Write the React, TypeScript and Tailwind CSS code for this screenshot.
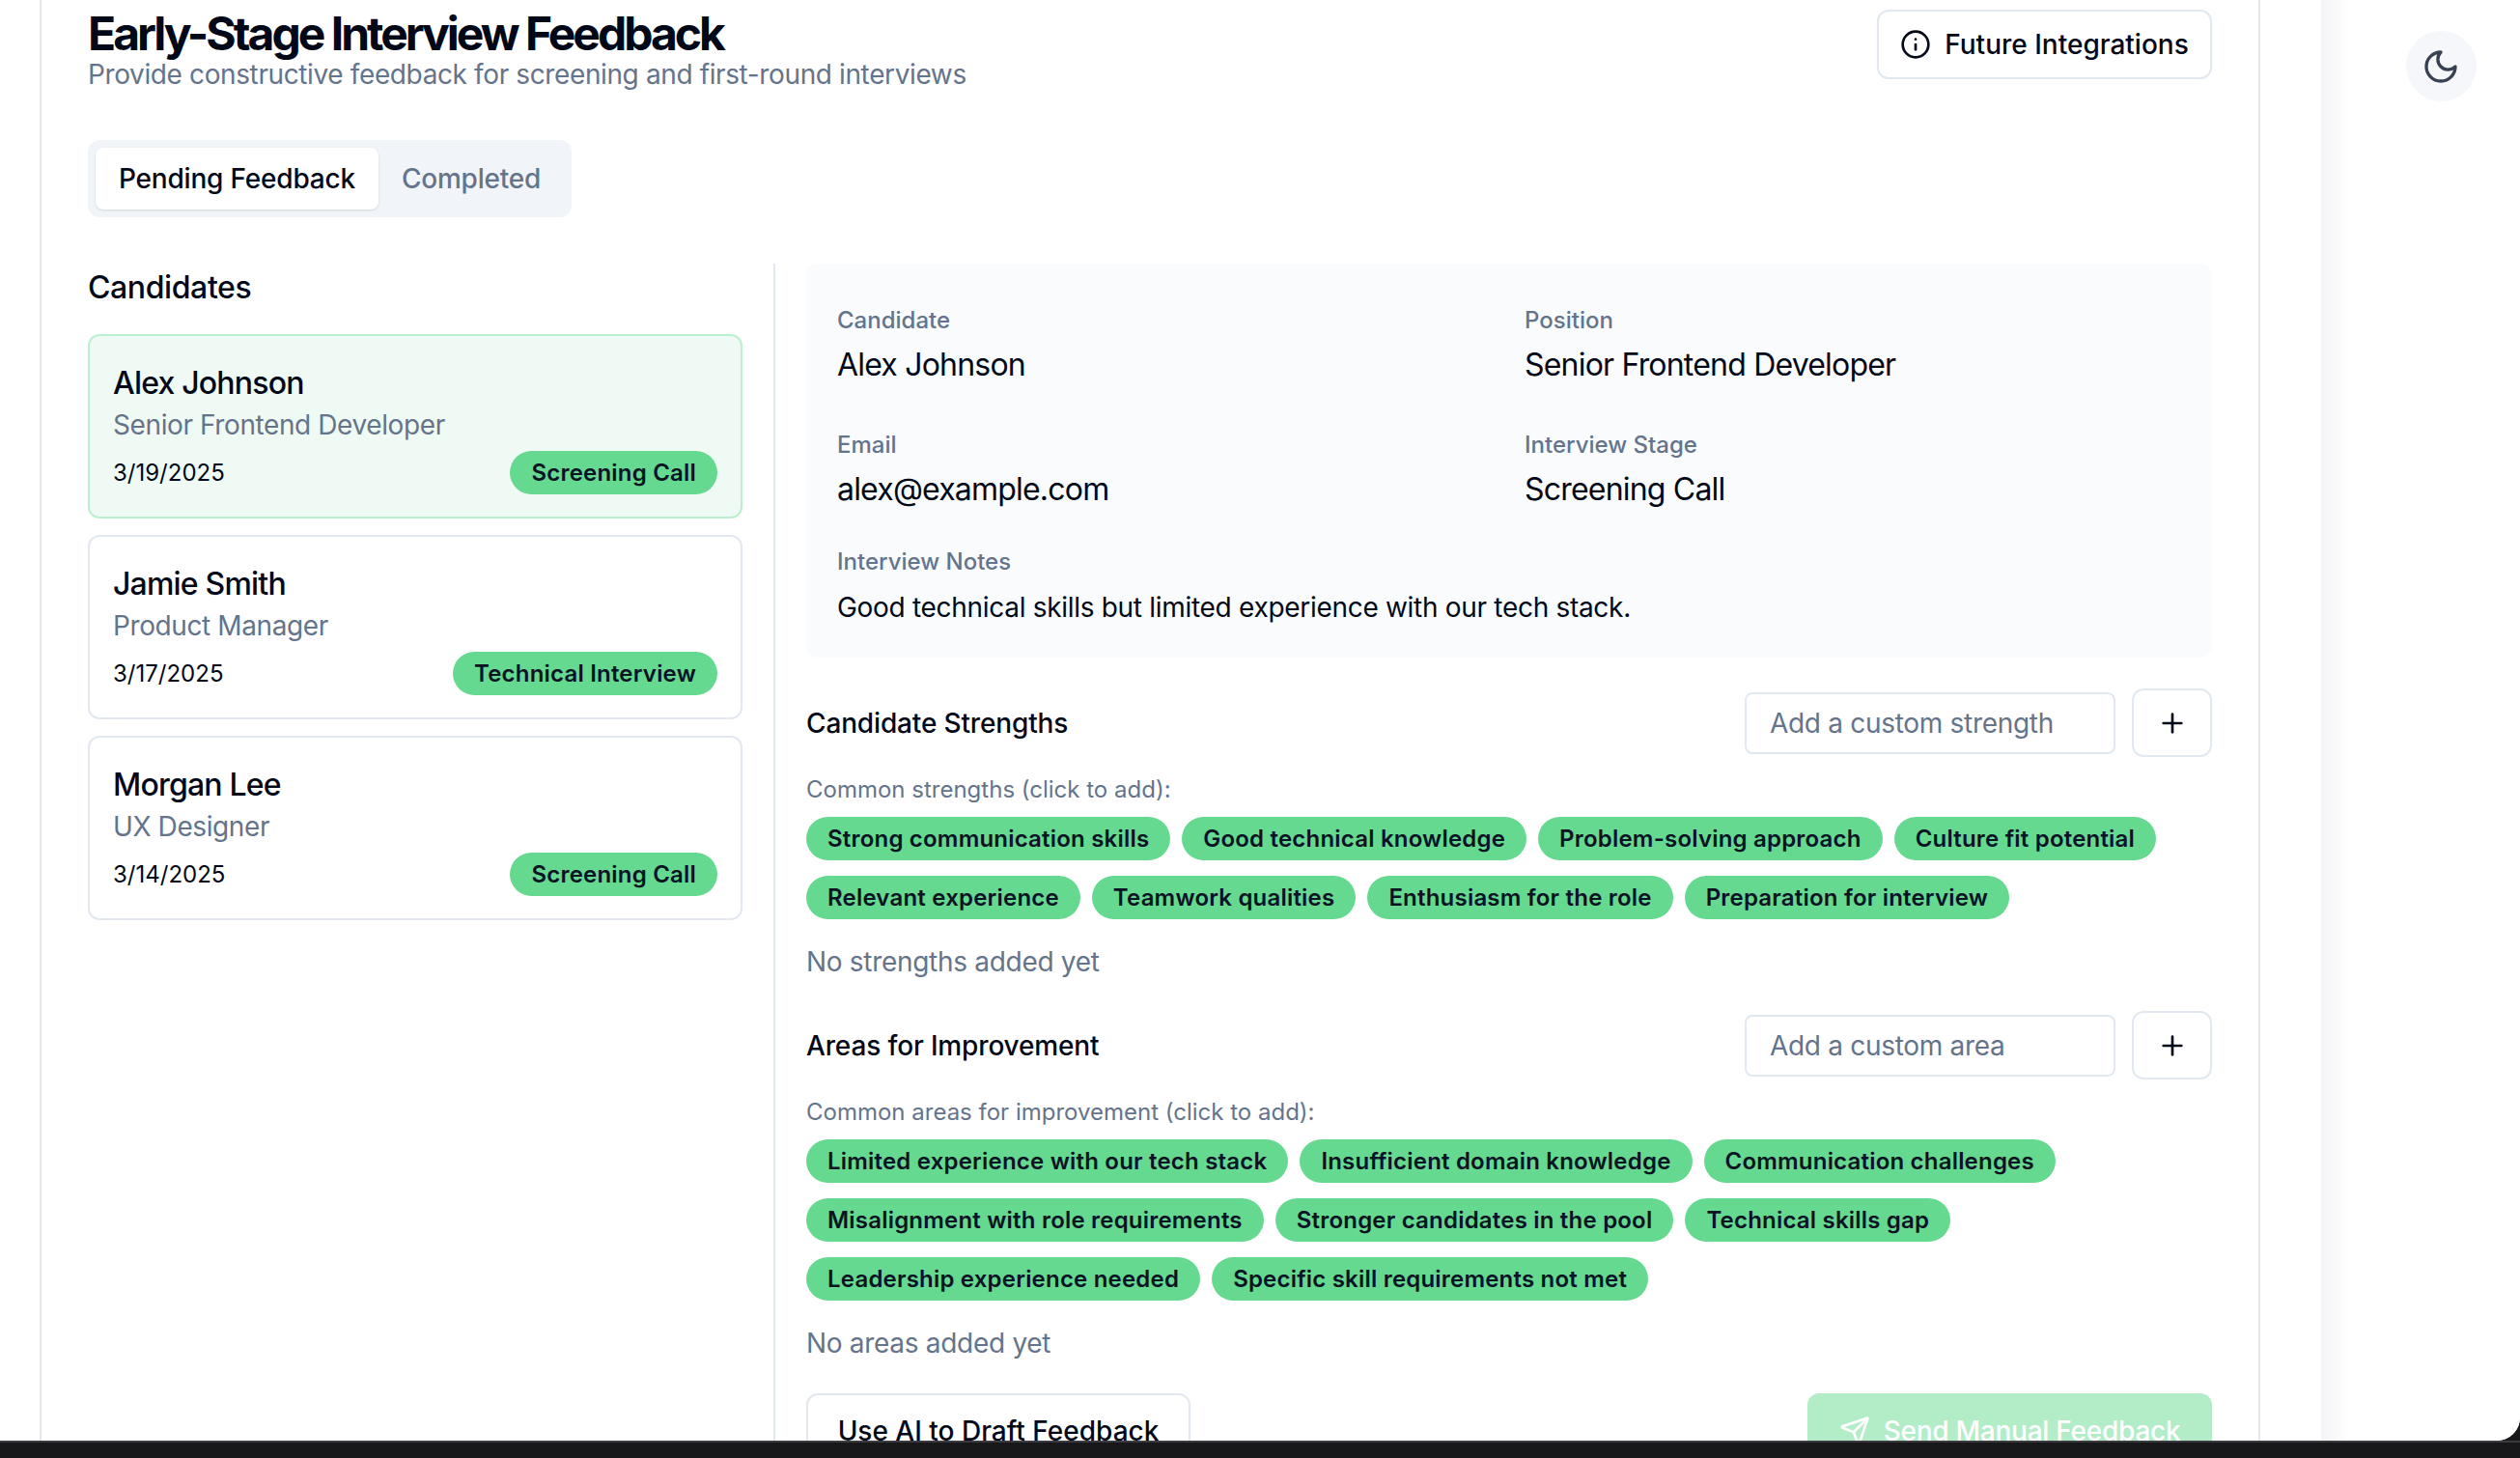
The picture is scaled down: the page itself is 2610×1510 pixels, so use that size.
import React from "react";
import { Info, Plus, Send } from "lucide-react";

const strengths = ["Strong communication skills","Good technical knowledge","Problem-solving approach","Culture fit potential","Relevant experience","Teamwork qualities","Enthusiasm for the role","Preparation for interview"];
const areas = ["Limited experience with our tech stack","Insufficient domain knowledge","Communication challenges","Misalignment with role requirements","Stronger candidates in the pool","Technical skills gap","Leadership experience needed","Specific skill requirements not met"];
const candidates = [
  { name: "Alex Johnson", role: "Senior Frontend Developer", date: "3/19/2025", stage: "Screening Call", active: true },
  { name: "Jamie Smith", role: "Product Manager", date: "3/17/2025", stage: "Technical Interview", active: false },
  { name: "Morgan Lee", role: "UX Designer", date: "3/14/2025", stage: "Screening Call", active: false },
];

function Chip({ children }: { children: React.ReactNode }) {
  return <span className="inline-flex h-[45px] items-center rounded-full bg-[#65d98f] px-[22px] text-[24px] font-semibold tracking-[0.2px] text-[#0b1324]">{children}</span>;
}

function Field({ label, value, className }: { label: string; value: string; className?: string }) {
  return (
    <div className={className}>
      <div className="text-[24px] leading-[32px] font-medium text-[#64748b]">{label}</div>
      <div className="mt-[10px] text-[32px] leading-[40px] tracking-[-0.8px] text-[#020817]">{value}</div>
    </div>
  );
}

function Section({ title, placeholder, common, items, empty }: { title: string; placeholder: string; common: string; items: string[]; empty: string }) {
  return (
    <div>
      <div className="flex items-center justify-between">
        <h3 className="text-[28px] font-medium tracking-[-0.15px] text-[#020817]">{title}</h3>
        <div className="flex items-center gap-[17px]">
          <div className="flex h-[64px] w-[384px] items-center rounded-[8px] border-2 border-[#e2e8f0] px-[24px] text-[28px] tracking-[-0.3px] text-[#64748b]">{placeholder}</div>
          <button className="flex h-[71px] w-[83px] items-center justify-center rounded-[12px] border-2 border-[#e2e8f0] bg-white text-[#020817]"><Plus size={32} strokeWidth={2} /></button>
        </div>
      </div>
      <div className="mt-[18px] text-[24px] leading-[32px] text-[#64748b]">{common}</div>
      <div className="mt-[12px] flex flex-wrap gap-x-[12px] gap-y-[16px]">
        {items.map((s) => <Chip key={s}>{s}</Chip>)}
      </div>
      <div className="mt-[24px] text-[28px] leading-[40px] tracking-[-0.3px] text-[#64748b]">{empty}</div>
    </div>
  );
}

export default function App() {
  return (
    <div className="relative h-[1510px] w-full overflow-hidden bg-[#18181b] font-['Inter',sans-serif]">
      <div className="flex h-[1492px] overflow-hidden rounded-br-[24px] bg-white">
        <main className="ml-[41px] h-[1560px] w-[2300px] shrink-0 border-x-2 border-[#e2e8f0] px-[48px] pt-[9px]">
          <div className="flex items-start justify-between">
            <div>
              <h1 className="text-[48px] leading-[52px] font-bold tracking-[-3px] text-[#020817]">Early-Stage Interview Feedback</h1>
              <p className="text-[28px] leading-[32px] tracking-[-0.38px] text-[#64748b]">Provide constructive feedback for screening and first-round interviews</p>
            </div>
            <button className="mt-[1px] flex h-[72px] w-[347px] items-center justify-center gap-[14px] rounded-[12px] border-2 border-[#e2e8f0] bg-white text-[28px] font-medium text-[#020817]">
              <Info size={32} strokeWidth={2} />Future Integrations
            </button>
          </div>

          <div className="mt-[52px] inline-flex h-[80px] items-center rounded-[12px] bg-[#f1f5f9] p-[8px]">
            <div className="flex h-[64px] items-center rounded-[8px] bg-white px-[24px] text-[28px] font-medium tracking-[-0.2px] text-[#020817] shadow-sm">Pending Feedback</div>
            <div className="flex h-[64px] items-center px-[24px] text-[28px] font-medium tracking-[-0.2px] text-[#64748b]">Completed</div>
          </div>

          <div className="mt-[48px] flex">
            <aside className="w-[678px] shrink-0">
              <h2 className="mb-[23px] text-[32px] leading-[50px] font-medium tracking-[-0.4px] text-[#020817]">Candidates</h2>
              <div className="flex flex-col gap-[17px]">
                {candidates.map((c) => (
                  <div key={c.name} className={`h-[191px] rounded-[12px] border-2 px-[24px] pt-[26px] ${c.active ? "border-[#bbf0cf] bg-[#f0faf4]" : "border-[#e2e8f0] bg-white"}`}>
                    <div className="text-[32px] leading-[46px] font-medium tracking-[-0.8px] text-[#020817]">{c.name}</div>
                    <div className="text-[28px] leading-[40px] tracking-[-0.4px] text-[#64748b]">{c.role}</div>
                    <div className="mt-[7px] flex items-center justify-between">
                      <span className="text-[24px] text-[#020817]">{c.date}</span>
                      <Chip>{c.stage}</Chip>
                    </div>
                  </div>
                ))}
              </div>
            </aside>
            <div className="ml-[32px] min-w-0 flex-1 border-l-2 border-[#e2e8f0] pl-[32px]">
              <div className="h-[408px] rounded-[12px] bg-[#f9fbfd] px-[32px] pt-[43px]">
                <div className="grid grid-cols-2 gap-x-[32px]">
                  <Field label="Candidate" value="Alex Johnson" />
                  <Field label="Position" value="Senior Frontend Developer" />
                  <Field className="mt-[47px]" label="Email" value="alex@example.com" />
                  <Field className="mt-[47px]" label="Interview Stage" value="Screening Call" />
                </div>
                <div className="mt-[39px] text-[24px] leading-[32px] font-medium text-[#64748b]">Interview Notes</div>
                <div className="mt-[11px] text-[28px] leading-[40px] tracking-[-0.3px] text-[#020817]">Good technical skills but limited experience with our tech stack.</div>
              </div>
              <div className="mt-[32px]">
                <Section title="Candidate Strengths" placeholder="Add a custom strength" common="Common strengths (click to add):" items={strengths} empty="No strengths added yet" />
              </div>
              <div className="mt-[31px]">
                <Section title="Areas for Improvement" placeholder="Add a custom area" common="Common areas for improvement (click to add):" items={areas} empty="No areas added yet" />
              </div>
              <div className="mt-[32px] flex justify-between">
                <button className="h-[76px] w-[398px] rounded-[12px] border-2 border-[#e2e8f0] bg-white pt-[2px] text-[28px] font-medium text-[#020817]">Use AI to Draft Feedback</button>
                <button className="flex h-[76px] w-[419px] items-center justify-center gap-[14px] rounded-[12px] bg-[#b3edc7] pt-[2px] text-[28px] font-medium tracking-[-0.25px] text-white"><Send size={32} strokeWidth={2} />Send Manual Feedback</button>
              </div>
            </div>
          </div>
        </main>
        <div className="ml-[63px] flex h-full flex-1 justify-center bg-gradient-to-r from-[#f4f4f7] to-white to-[30px] pt-[32px] pl-[42px]">
          <button className="flex h-[73px] w-[73px] items-center justify-center rounded-full bg-[#f5f7fa] text-[#374151]">
            <svg width="40" height="40" viewBox="0 0 24 24" fill="none" stroke="currentColor" strokeWidth="2" strokeLinecap="round" strokeLinejoin="round"><path d="M12 3a6 6 0 0 0 9 9 9 9 0 1 1-9-9Z" /></svg>
          </button>
        </div>
      </div>
      <div className="absolute inset-x-0 top-[1492px] h-[2px] bg-[#3a3a40]" />
    </div>
  );
}
